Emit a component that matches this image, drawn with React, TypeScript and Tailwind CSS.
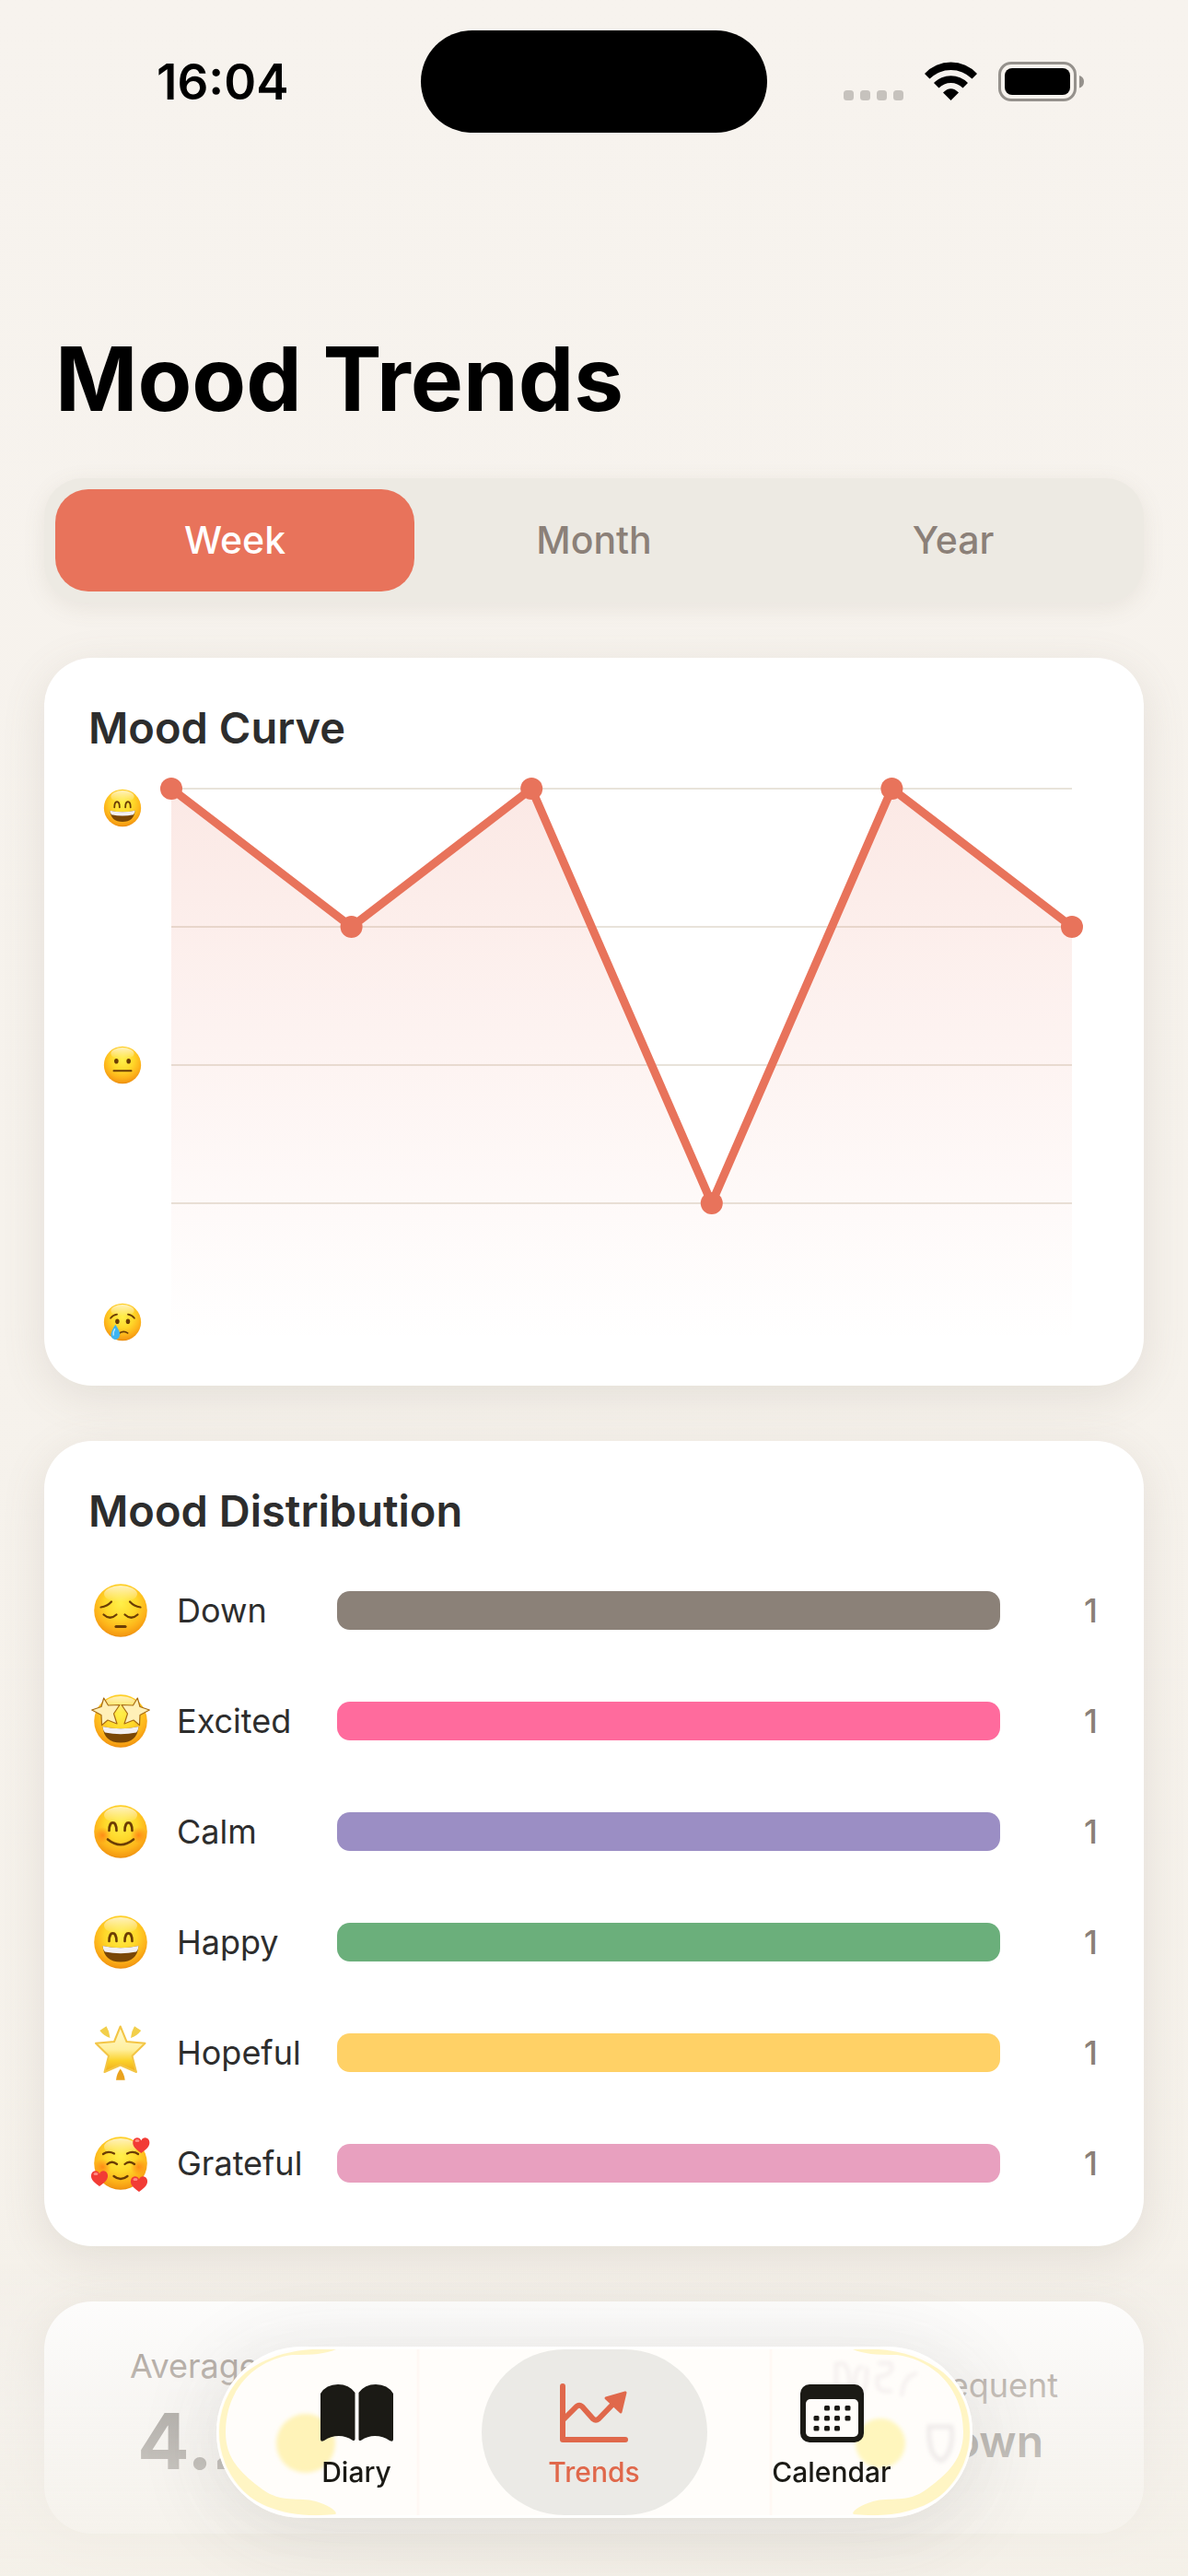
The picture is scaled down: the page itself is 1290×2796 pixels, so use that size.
import React, { useId, useState } from 'react';

type Mood = 'down' | 'excited' | 'calm' | 'happy' | 'hopeful' | 'grateful' | 'neutral' | 'sad';

const INK = '#6b3d05';

const STAR_EYE = 'M11.7 5 L16.5 13 L29 12.5 L22.5 22 L26 33 L16 29 L9.5 34.5 L9 23.5 L-1.3 18 L9 14.5Z';
const HEART = 'M0 9 C-9 3 -10 -1 -8.500 -5 C-6.500 -9 -1.500 -8.500 0 -4.500 C1.500 -8.500 6.500 -9 8.500 -5 C10 -1 9 3 0 9Z';

const Grin = ({ y }: { y: number }) => (
  <g transform={`translate(0 ${y})`}>
    <path d="M10.500 0 Q30 4.500 49.500 0 Q48 17.500 30 17.500 Q12 17.500 10.500 0Z" fill="#7a4706" />
    <path d="M10.500 0 Q30 4.500 49.500 0 Q49.200 4.500 47 6.500 Q30 10 13 6.500 Q10.800 4.500 10.500 0Z" fill="#f2f0f3" />
  </g>
);

const SmilingEyes = () => (
  <g fill="none" stroke={INK} strokeWidth="2.6" strokeLinecap="round">
    <path d="M17.5 29 C17.500 17.500 25.500 17.500 25.500 29" />
    <path d="M34.5 29 C34.500 17.500 42.500 17.500 42.500 29" />
  </g>
);

const features: Record<Mood, React.ReactNode> = {
  down: (
    <g fill="none" stroke={INK} strokeWidth="2.2" strokeLinecap="round">
      <path d="M8.500 26.500 Q15.500 25.500 20 20.500" />
      <path d="M51.500 26.500 Q44.500 25.500 40 20.500" />
      <path d="M11.500 34.500 Q18.500 41 25.500 34.500" />
      <path d="M34.500 34.500 Q41.500 41 48.500 34.500" />
      <path d="M25 47.500 H35" strokeWidth="3.200" />
    </g>
  ),
  excited: (
    <>
      <Grin y={36} />
      <g fill="#fff0b8" stroke="#a86c12" strokeWidth="1.200" strokeLinejoin="round">
        <path d={STAR_EYE} />
        <path d={STAR_EYE} transform="translate(60 0) scale(-1 1)" />
      </g>
    </>
  ),
  calm: (
    <>
      <SmilingEyes />
      <path d="M16 38.500 Q30 50 44 38.500" fill="none" stroke={INK} strokeWidth="2.600" strokeLinecap="round" />
    </>
  ),
  happy: (
    <>
      <SmilingEyes />
      <Grin y={34} />
    </>
  ),
  hopeful: null,
  grateful: (
    <>
      <g fill="none" stroke={INK} strokeWidth="2.300" strokeLinecap="round">
        <path d="M11 20 Q16.500 16 23 19.500" />
        <path d="M49 20 Q43.500 16 37 19.500" />
        <path d="M15.500 31 Q20.500 26.500 26 31" />
        <path d="M34.500 31 Q39.500 26.500 45 31" />
        <path d="M22.500 44 Q30 50 37.500 44" />
      </g>
      <g fill="#f23b35">
        <path d={HEART} transform="translate(52.300 10)" />
        <path d={HEART} transform="translate(7 46)" />
        <path d={HEART} transform="translate(50 52)" />
      </g>
      <g fill="#ff8d84">
        <ellipse cx="48" cy="5.500" rx="2.500" ry="1.500" />
        <ellipse cx="3" cy="41.500" rx="2.500" ry="1.500" />
        <ellipse cx="46" cy="47.500" rx="2.500" ry="1.500" />
      </g>
    </>
  ),
  neutral: (
    <>
      <ellipse cx="20.500" cy="24" rx="3.300" ry="4" fill={INK} />
      <ellipse cx="39.500" cy="24" rx="3.300" ry="4" fill={INK} />
      <path d="M16.500 39 H43.500" stroke={INK} strokeWidth="3" strokeLinecap="round" />
    </>
  ),
  sad: (
    <>
      <g fill="none" stroke={INK} strokeWidth="2.500" strokeLinecap="round">
        <path d="M11.500 24 Q15 19 21.500 18" />
        <path d="M48.500 24 Q45 19 38.500 18" />
        <path d="M24 48 Q31 42 38 47" />
      </g>
      <ellipse cx="22" cy="29" rx="3.200" ry="4" fill={INK} />
      <ellipse cx="38.500" cy="29" rx="3.200" ry="4" fill={INK} />
      <path d="M19 34 Q26 44 26 49 Q25 57 18.500 57 Q12 56 12 49 Q13 43 19 34Z" fill="#3db4f2" />
      <path d="M18 41 Q15 46 16 50" fill="none" stroke="#b9e8ff" strokeWidth="2" strokeLinecap="round" />
    </>
  ),
};

const MoodIcon = ({ mood, className }: { mood: Mood; className: string }) => {
  const id = useId();
  const blush = mood === 'calm' || mood === 'grateful';

  return (
    <svg viewBox="0 0 60 60" className={`shrink-0 overflow-visible ${className}`} aria-hidden="true">
      <defs>
        <radialGradient id={`${id}face`} cx="50%" cy="36%" r="66%">
          <stop offset="0" stopColor="#fff04a" />
          <stop offset="0.45" stopColor="#ffd82a" />
          <stop offset="0.75" stopColor="#fdb31a" />
          <stop offset="0.92" stopColor="#f49a12" />
          <stop offset="1" stopColor="#dd7f0a" />
        </radialGradient>
        <linearGradient id={`${id}shine`} x1="0" y1="0" x2="0" y2="1">
          <stop offset="0" stopColor="#fff" stopOpacity="0.7" />
          <stop offset="1" stopColor="#fff" stopOpacity="0" />
        </linearGradient>
        <linearGradient id={`${id}star`} x1="0" y1="0" x2="0" y2="1">
          <stop offset="0.1" stopColor="#fff7c8" />
          <stop offset="0.5" stopColor="#fff0a0" />
          <stop offset="0.75" stopColor="#fbd22b" />
          <stop offset="1" stopColor="#efa91c" />
        </linearGradient>
        <radialGradient id={`${id}blush`}>
          <stop offset="0" stopColor="#ff7a12" stopOpacity="0.75" />
          <stop offset="1" stopColor="#ff7a12" stopOpacity="0" />
        </radialGradient>
      </defs>
      {mood === 'hopeful' ? (
        <g strokeLinejoin="round">
          <path
            d="M29.7 1.500 L36.500 18 L56.500 19.700 L42.500 33.500 L47 51 L29.700 43.500 L12.500 51 L17 33.500 L3 19.700 L23 18Z"
            fill={`url(#${id}star)`}
            stroke="#f3c545"
            strokeWidth="2"
          />
          <path d="M7.300 6 L14.500 1.300 Q18 7 18.500 14 Q12 12 7.300 6Z" fill="#f2cf4a" />
          <path d="M52.200 6 L45 1.300 Q41.500 7 41 14 Q47.500 12 52.200 6Z" fill="#f2cf4a" />
          <path d="M29.700 47.500 Q25.500 53 25 59.700 H34.700 Q34 53 29.700 47.500Z" fill="#eaa31e" />
        </g>
      ) : (
        <>
          <circle cx="30" cy="30" r="28.800" fill={`url(#${id}face)`} />
          <ellipse cx="30" cy="12" rx="18" ry="9" fill={`url(#${id}shine)`} />
        </>
      )}
      {blush && (
        <>
          <circle cx="10.500" cy="34" r="9" fill={`url(#${id}blush)`} />
          <circle cx="49.500" cy="34" r="9" fill={`url(#${id}blush)`} />
        </>
      )}
      {features[mood]}
    </svg>
  );
};

const StatusBar = () => (
  <header className="grid grid-cols-[1fr_376px_1fr] items-center pt-[33px] text-black">
    <time className="pl-[170px] text-[53px] leading-[60px] font-semibold">16:04</time>
    <div className="h-[111px] rounded-full bg-black" />
    <div className="flex items-end justify-end gap-[23px] pr-[113px]">
      <svg viewBox="0 0 65 12" className="h-[12px] w-[65px]" fill="#c6c2bd" aria-hidden="true">
        {[0, 18, 36, 54].map(x => (
          <rect key={x} x={x} width="11" height="11" rx="3.500" />
        ))}
      </svg>
      <svg viewBox="0 0 57 43" className="h-[43px] w-[57px]" aria-hidden="true">
        <path d="M0 13 A39 39 0 0 1 57 13 L51.500 18.500 A32.600 32.600 0 0 0 5.500 18.500Z" />
        <path d="M10 23 A26 26 0 0 1 47 23 L41.500 28.500 A18 18 0 0 0 15.500 28.500Z" />
        <path d="M20 33.500 Q28.500 25 37 33.500 L28.500 42Z" />
      </svg>
      <svg viewBox="0 0 93 43" className="h-[43px] w-[93px]" aria-hidden="true">
        <rect x="1.500" y="1.500" width="82" height="40" rx="12.500" fill="none" stroke="#95918c" strokeWidth="3" />
        <rect x="7" y="7" width="71" height="29" rx="8" />
        <path d="M88 15 Q93 16.500 93 21.500 Q93 27 88 28.500Z" fill="#95918c" />
      </svg>
    </div>
  </header>
);

const PERIODS = ['Week', 'Month', 'Year'];

const PeriodPicker = () => {
  const [period, setPeriod] = useState('Week');

  return (
    <div className="mt-12 grid grid-cols-3 rounded-[42px] bg-[#edeae3] p-3 shadow-[0_6px_24px_rgba(120,105,90,0.1)]">
      {PERIODS.map(p => (
        <button
          key={p}
          type="button"
          aria-pressed={p === period}
          onClick={() => setPeriod(p)}
          className={`h-[111px] rounded-[36px] text-[41px] font-medium ${p === period ? 'bg-[#e8735b] text-white' : 'text-[#8b8078]'}`}
        >
          {p}
        </button>
      ))}
    </div>
  );
};

const Card = ({ title, children }: { title: string; children: React.ReactNode }) => (
  <section className="mt-[60px] rounded-[52px] bg-white p-12 shadow-[0_12px_48px_rgba(120,105,90,0.14)]">
    <h2 className="text-[47px] leading-[56px] font-semibold text-[#2d2d2d]">{title}</h2>
    {children}
  </section>
);

const SCORES = [5, 4, 5, 2, 5, 4];
const CHART_W = 978;
const CHART_H = 600;

const MoodCurve = () => {
  const points = SCORES.map((score, i) => [
    (i * CHART_W) / (SCORES.length - 1),
    CHART_H - ((score - 1) * CHART_H) / 4,
  ]);
  const line = points.map(([x, y]) => `${x},${y}`).join(' ');

  return (
    <div className="mt-[38px] flex gap-[32px] pr-[30px] pl-4">
      <div className="flex flex-col justify-between">
        <MoodIcon mood="happy" className="size-[42px]" />
        <MoodIcon mood="neutral" className="size-[42px]" />
        <MoodIcon mood="sad" className="size-[42px]" />
      </div>
      <svg viewBox={`0 0 ${CHART_W} ${CHART_H}`} className="min-w-0 flex-1 overflow-visible" role="img" aria-label="Mood Curve">
        <defs>
          <linearGradient id="curveFill" gradientUnits="userSpaceOnUse" x1="0" y1="0" x2="0" y2={CHART_H}>
            <stop offset="0" stopColor="#e8735b" stopOpacity="0.16" />
            <stop offset="1" stopColor="#e8735b" stopOpacity="0" />
          </linearGradient>
        </defs>
        {[0, 150, 300, 450].map(y => (
          <path key={y} d={`M0 ${y} H${CHART_W}`} stroke="#e8e3da" strokeWidth="2" />
        ))}
        <polygon points={`0,${CHART_H} ${line} ${CHART_W},${CHART_H}`} fill="url(#curveFill)" />
        <polyline points={line} fill="none" stroke="#e8735b" strokeWidth="9" strokeLinejoin="round" />
        {points.map(([x, y]) => (
          <circle key={x} cx={x} cy={y} r="12" fill="#e8735b" />
        ))}
      </svg>
    </div>
  );
};

const DISTRIBUTION: { mood: Mood; label: string; bar: string; count: number }[] = [
  { mood: 'down', label: 'Down', bar: 'bg-[#8b8178]', count: 1 },
  { mood: 'excited', label: 'Excited', bar: 'bg-[#ff6b9d]', count: 1 },
  { mood: 'calm', label: 'Calm', bar: 'bg-[#9b8ec4]', count: 1 },
  { mood: 'happy', label: 'Happy', bar: 'bg-[#6baf7b]', count: 1 },
  { mood: 'hopeful', label: 'Hopeful', bar: 'bg-[#ffd166]', count: 1 },
  { mood: 'grateful', label: 'Grateful', bar: 'bg-[#e8a0bf]', count: 1 },
];

const MoodDistribution = () => {
  const max = Math.max(...DISTRIBUTION.map(d => d.count));

  return (
    <ul className="mt-[38px] flex flex-col gap-9">
      {DISTRIBUTION.map(d => (
        <li key={d.label} className="flex h-[84px] items-center">
          <div className="flex w-[70px] justify-center">
            <MoodIcon mood={d.mood} className="size-[60px]" />
          </div>
          <span className="w-[200px] pl-[26px] text-[36px] text-[#2d2d2d]">{d.label}</span>
          <div className="flex-1">
            <div className={`h-[42px] rounded-[14px] ${d.bar}`} style={{ width: `${(d.count / max) * 100}%` }} />
          </div>
          <span className="w-[108px] pr-0.5 text-right text-[36px] font-medium text-[#8b8078]">{d.count}</span>
        </li>
      ))}
    </ul>
  );
};

const Summary = () => (
  <section className="mt-[60px] grid grid-cols-3 items-center rounded-[52px] bg-white p-12 shadow-[0_12px_48px_rgba(120,105,90,0.14)]">
    <div className="flex flex-col gap-2 pl-[45px]">
      <p className="text-[36px] leading-[44px] text-[#8b8078]">Average</p>
      <p className="pl-2 text-[84px] leading-[104px] font-bold text-[#55514e]">4.2</p>
    </div>
    <div />
    <div className="flex flex-col gap-2 pr-[45px] text-right">
      <p className="text-[36px] leading-[44px] text-[#8b8078]">Frequent</p>
      <p className="pr-4 text-[48px] leading-[62px] font-semibold text-[#55514e]">Down</p>
    </div>
  </section>
);

const BookIcon = () => (
  <svg viewBox="0 0 79 62" className="h-[62px] w-[79px]" fill="#1b1a15" aria-hidden="true">
    <path d="M0 10 Q6 0 19 0 Q31 0 37.500 9 V59.500 Q37 62 34.500 60.500 Q28 56 20 56 Q11 56 4 61 Q0 63 0 59.500Z" />
    <path d="M41.500 9 Q48 0 60 0 Q73 0 79 10 V59.500 Q79 63 75 61 Q68 56 59 56 Q51 56 44.500 60.500 Q41.500 62 41.500 59.500Z" />
  </svg>
);

const TrendIcon = () => (
  <svg viewBox="0 0 74 64" className="h-[64px] w-[74px]" fill="none" stroke="#e0684b" aria-hidden="true">
    <path d="M3 3 V61 H71" strokeWidth="6" strokeLinecap="round" strokeLinejoin="round" />
    <path d="M4 39 L18 25 Q21 22.500 24 25 L36 38.500 Q39 41 42 38.500 L58 22" strokeWidth="6" strokeLinejoin="round" />
    <path d="M50 16 L71 10 L66 31Z" fill="#e0684b" strokeWidth="3" strokeLinejoin="round" />
  </svg>
);

const CALENDAR_DOTS = [
  [26, 23], [37, 23], [48.5, 23],
  [14.5, 34], [26, 34], [37, 34], [48.5, 34],
  [14.5, 45], [26, 45], [37, 45],
];

const CalendarIcon = () => (
  <svg viewBox="0 0 69 63" className="h-[63px] w-[69px]" fill="#1b1a15" aria-hidden="true">
    <rect width="69" height="63" rx="10" />
    <rect x="6" y="16" width="57" height="41" rx="5" fill="#fffdfa" />
    {CALENDAR_DOTS.map(([x, y]) => (
      <rect key={`${x}-${y}`} x={x} y={y} width="6" height="5.500" rx="1.500" />
    ))}
  </svg>
);

const TABS = [
  { label: 'Diary', href: '#diary', icon: <BookIcon /> },
  { label: 'Trends', href: '#trends', icon: <TrendIcon />, active: true },
  { label: 'Calendar', href: '#calendar', icon: <CalendarIcon /> },
];

// Refracted light along the rim of the floating bar
const GlassRim = () => (
  <svg viewBox="0 0 821 186" className="absolute inset-0 size-full" aria-hidden="true">
    <defs>
      <filter id="soft" x="-50%" y="-50%" width="200%" height="200%">
        <feGaussianBlur stdDeviation="2" />
      </filter>
      <path
        id="rim"
        d="M130 3 C60 -2 2 30 2 93 C2 156 55 190 129 182 C133 180 122 172 108 168 C90 163 70 170 50 155 C24 136 10 120 10 93 C10 44 44 14 82 9 C105 9 118 8 130 3Z"
      />
    </defs>
    <g fill="#fff5c4">
      <use href="#rim" />
      <use href="#rim" transform="translate(821 0) scale(-1 1)" />
    </g>
    <g filter="url(#soft)">
      <circle cx="97" cy="105" r="32" fill="#fff3b8" />
      <circle cx="721" cy="105" r="27" fill="#fff6bd" />
      <path d="M774 87 H798 C801 105 795 119 787 124 C777 120 773 106 774 87Z" fill="none" stroke="#efebea" strokeWidth="5" />
      <path d="M673 51 V17 M673 20 Q688 10 688 50 M702 22 Q691 22 694 49 Q707 56 706 22 M718 18 H732 Q738 30 718 33 Q714 51 734 48 M744 54 Q746 31 761 29" fill="none" stroke="#f4efee" strokeWidth="4" />
    </g>
    <g stroke="#fff8f4" strokeWidth="3">
      <path d="M219 3 V183" />
      <path d="M602 3 V183" />
    </g>
  </svg>
);

const TabBar = () => (
  <div className="pointer-events-none fixed inset-x-0 bottom-0 bg-linear-to-b from-[#f5f1eb]/0 via-[#f3f0eb]/60 via-45% to-[#f4f0e8]/90 pt-[90px] pb-[63px]">
    <nav className="pointer-events-auto relative mx-auto w-[821px] rounded-full bg-[#fffdfa] p-[3px] shadow-[0_12px_90px_rgba(60,60,60,0.14)]">
      <GlassRim />
      <ul className="relative flex justify-center gap-[13px]">
        {TABS.map(tab => (
          <li key={tab.label}>
            <a
              href={tab.href}
              aria-current={tab.active ? 'page' : undefined}
              className={`flex h-[180px] w-[245px] flex-col items-center rounded-full pt-[37px] text-[30px] leading-[36px] font-medium ${
                tab.active ? 'bg-[#ebeae6] text-[#e0684b]' : 'text-[#1b1a15]'
              }`}
            >
              <span className="flex h-16 items-center">{tab.icon}</span>
              <span className="mt-3.5">{tab.label}</span>
            </a>
          </li>
        ))}
      </ul>
      <div className="pointer-events-none absolute inset-0 rounded-full border-[3px] border-white/80" />
    </nav>
  </div>
);

const App: React.FC = () => (
  <div className="min-h-screen bg-linear-to-b from-[#f7f3ee] to-[#f5f1ea] pb-[46px] font-[Inter,sans-serif]">
    <StatusBar />
    <main className="px-12">
      <h1 className="mt-[207px] pl-3 text-[96px] leading-[120px] font-bold text-black">Mood Trends</h1>
      <PeriodPicker />
      <Card title="Mood Curve">
        <MoodCurve />
      </Card>
      <Card title="Mood Distribution">
        <MoodDistribution />
      </Card>
      <Summary />
    </main>
    <TabBar />
  </div>
);

export default App;
